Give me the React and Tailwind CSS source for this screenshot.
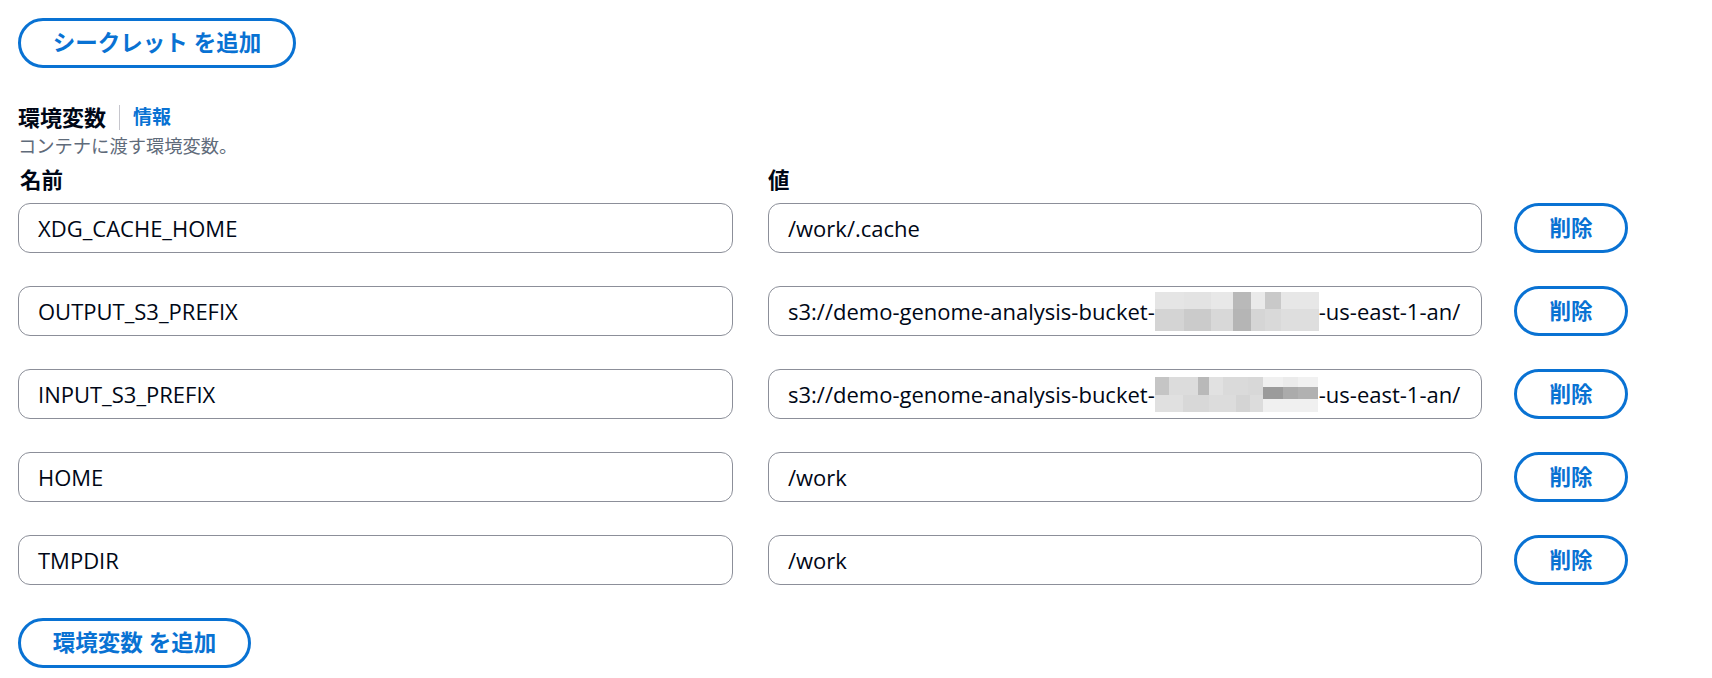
import React from 'react'

const FONT = "font-['Open_Sans','Noto_Sans_CJK_JP',sans-serif]"

// pixelated redaction blocks, [x, y, w, h, color]
const BLOB_A = [
  [0, 0, 29, 17, '#e5e5e5'], [29, 0, 27, 17, '#e3e3e3'], [56, 0, 22, 17, '#e8e8e8'],
  [78, 0, 18, 17, '#b9b9b9'], [96, 0, 14, 17, '#eaeaea'], [110, 0, 16, 17, '#c9c9c9'],
  [126, 0, 38, 17, '#e7e7e7'],
  [0, 17, 29, 22, '#d4d4d4'], [29, 17, 27, 22, '#cbcbcb'], [56, 17, 22, 22, '#d8d8d8'],
  [78, 17, 18, 22, '#b5b5b5'], [96, 17, 14, 22, '#d5d5d5'], [110, 17, 16, 22, '#d9d9d9'],
  [126, 17, 38, 22, '#dedede'],
]

const BLOB_B = [
  [0, 0, 14, 18, '#c5c5c5'], [14, 0, 29, 18, '#dcdcdc'], [43, 0, 11, 18, '#b9b9b9'],
  [54, 0, 14, 18, '#e1e1e1'], [68, 0, 25, 18, '#dadada'], [93, 0, 15, 18, '#d8d8d8'],
  [108, 0, 20, 10, '#f0f0f0'], [128, 0, 15, 10, '#ebebeb'], [143, 0, 20, 10, '#f1f1f1'],
  [108, 10, 20, 12, '#9b9b9b'], [128, 10, 15, 12, '#ababab'], [143, 10, 20, 12, '#b1b1b1'],
  [0, 18, 28, 17, '#e0e0e0'], [28, 18, 26, 17, '#d8d8d8'], [54, 18, 27, 17, '#dcdcdc'],
  [81, 18, 14, 17, '#d4d4d4'], [95, 18, 13, 17, '#dcdcdc'], [108, 22, 55, 13, '#f0f0f0'],
]

function Mosaic({ cells, h }) {
  return (
    <svg width="164" height={h} viewBox={`0 0 164 ${h}`} className="inline-block shrink-0">
      {cells.map(([x, y, w, hh, c], i) => (
        <rect key={i} x={x} y={y} width={w} height={hh} fill={c} />
      ))}
    </svg>
  )
}

function Field({ children, className = '' }) {
  return (
    <div
      className={`h-[50px] flex items-center pl-[19px] border border-[#8c8f99] rounded-[12px] text-[22px] text-[#000716] whitespace-nowrap overflow-hidden ${className}`}
    >
      {children}
    </div>
  )
}

function PillButton({ children, className = '' }) {
  return (
    <button
      className={`h-[50px] rounded-full border-[3px] border-[#0972d3] text-[#0972d3] font-bold flex items-center justify-center ${className}`}
    >
      {children}
    </button>
  )
}

const ROWS = [
  { key: 'XDG_CACHE_HOME', value: '/work/.cache' },
  { key: 'OUTPUT_S3_PREFIX', value: 'bucket', blob: BLOB_A, h: 39 },
  { key: 'INPUT_S3_PREFIX', value: 'bucket', blob: BLOB_B, h: 35 },
  { key: 'HOME', value: '/work' },
  { key: 'TMPDIR', value: '/work' },
]

export default function App() {
  return (
    <div className={`w-[1712px] h-[678px] bg-white pl-[18px] pt-[18px] ${FONT}`}>
      <PillButton className="w-[278px] text-[22.5px]">シークレット を追加</PillButton>

      {/* heading */}
      <div className="mt-[34px] flex items-center h-[30px]">
        <span className="text-[22px] font-bold text-[#000716]">環境変数</span>
        <span className="mx-[13px] w-px h-[25px] bg-[#c6c6cd]" />
        <span className="text-[19px] font-bold text-[#0972d3]">情報</span>
      </div>
      <div className="text-[18.3px] leading-[27px] text-[#5f6b7a]">コンテナに渡す環境変数。</div>

      {/* labels */}
      <div className="mt-[6px] flex h-[30px] items-center text-[21.5px] font-bold text-[#000716]">
        <span className="w-[750px] pl-[2px]">名前</span>
        <span>値</span>
      </div>

      <div className="mt-[8px] flex flex-col gap-[33px]">
        {ROWS.map(r => (
          <div key={r.key} className="flex items-center">
            <Field className="w-[715px]">{r.key}</Field>
            <Field className="w-[714px] ml-[35px]">
              {r.blob ? (
                <>
                  <span>s3://demo-genome-analysis-bucket-</span>
                  <Mosaic cells={r.blob} h={r.h} />
                  <span>-us-east-1-an/</span>
                </>
              ) : (
                r.value
              )}
            </Field>
            <PillButton className="w-[114px] ml-[32px] text-[21.5px]">削除</PillButton>
          </div>
        ))}
      </div>

      <PillButton className="w-[233px] mt-[33px] text-[22.5px]">環境変数 を追加</PillButton>
    </div>
  )
}
